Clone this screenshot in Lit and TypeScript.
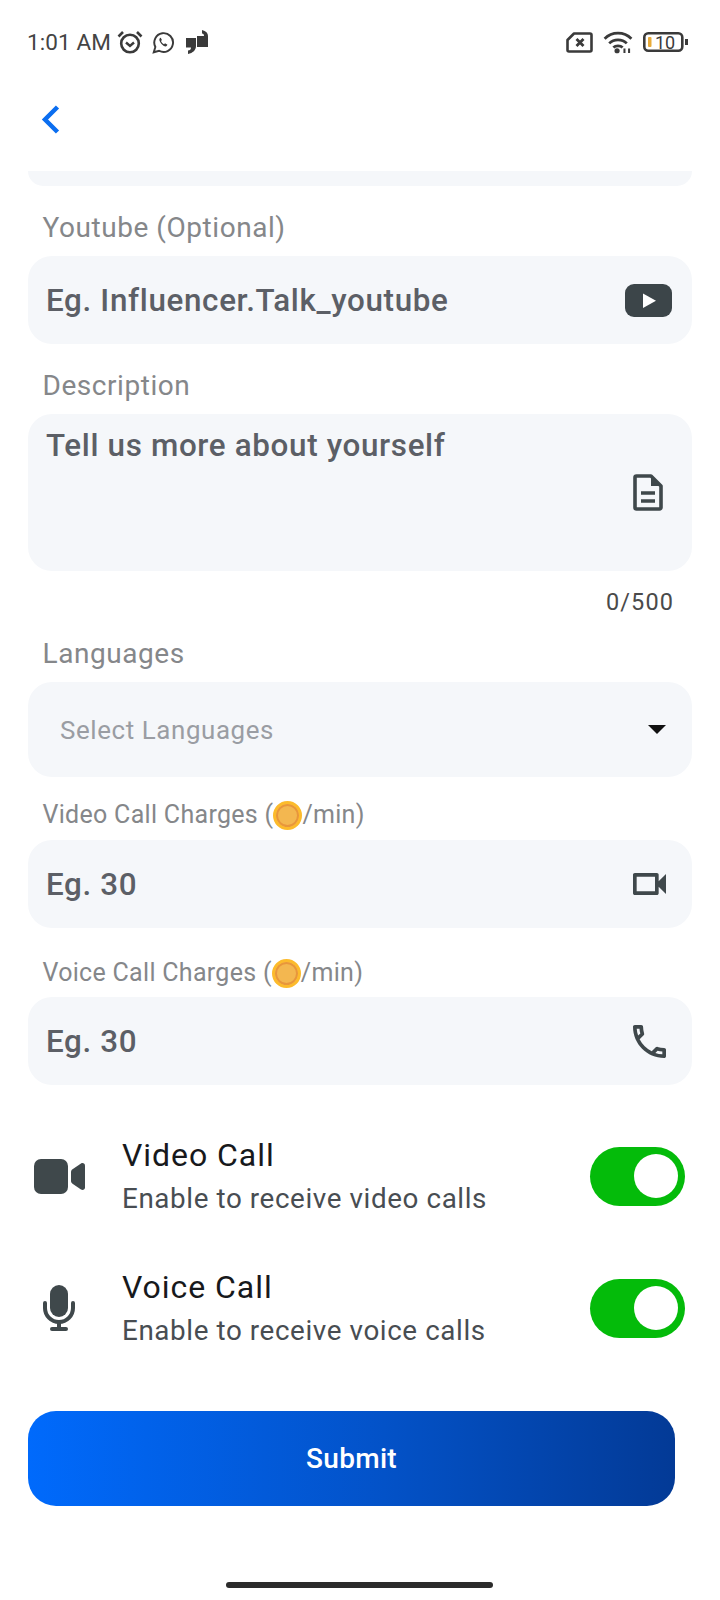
import { LitElement, html, css } from "lit";
import { customElement } from "lit/decorators.js";

const ink = "#3f484b";

@customElement("app-root")
export class AppRoot extends LitElement {
  static styles = css`
    :host { display: block; width: 720px; height: 1600px; background: #fff; font-family: Roboto, "Liberation Sans", sans-serif; overflow: hidden; position: relative; }
    .status { height: 88px; box-sizing: border-box; padding: 27px 32px 0 27px; display: flex; align-items: flex-start; color: #3a3a3a; }
    .time { font-size: 22.5px; line-height: 30px; color: #444; letter-spacing: .1px; }
    .sicons { display: flex; align-items: center; margin-left: 6px; height: 30px; }
    .whats { margin-left: 9px; }
    .quote { margin-left: 11px; }
    .right { margin-left: auto; display: flex; align-items: center; gap: 10px; height: 30px; }
    .nav { height: 83px; padding-left: 40px; box-sizing: border-box; padding-top: 17px; }
    .nav svg { display: block; }
    .form { padding: 0 28px; }
    .stub { height: 15px; background: #f5f7fa; border-radius: 0 0 20px 20px; }
    .label { color: #85878a; font-size: 28px; line-height: 32px; padding-left: 14.5px; letter-spacing: .55px; }
    .l1 { margin-top: 26px; margin-bottom: 12px; }
    .l2 { margin-top: 26px; margin-bottom: 12px; }
    .l3 { margin-top: 21px; margin-bottom: 12px; }
    .lsm { font-size: 25px; letter-spacing: .3px; display: flex; align-items: center; line-height: 30px; height: 30px; }
    .lsm.v { margin-top: 23px; margin-bottom: 10px; }
    .lsm.a { margin-top: 30px; margin-bottom: 9px; }
    .coin { width: 29px; height: 29px; border-radius: 50%; background: #f3b750; border: 3.5px solid #fcbb2c; box-sizing: border-box; box-shadow: inset 0 0 0 2px #e8963c; flex: none; }
    .field { height: 88px; background: #f5f7fa; border-radius: 24px; display: flex; align-items: center; padding: 0 20px 0 18px; box-sizing: border-box; justify-content: space-between; }
    .ph { color: #5c5f66; font-size: 31.4px; font-weight: 500; letter-spacing: .65px; }
    .area { height: 157px; align-items: flex-start; padding-top: 13px; position: relative; }
    .area svg { position: absolute; right: 29px; top: 60px; }
    .count { text-align: right; color: #4a4a4a; font-size: 23.5px; line-height: 30px; padding-right: 18px; margin-top: 16px; letter-spacing: 1.1px; }
    .select { height: 95px; padding-left: 32px; padding-right: 26px; }
    .sel { color: #9a9da3; font-size: 25.9px; letter-spacing: .6px; }
    .caret { width: 0; height: 0; border-left: 9px solid transparent; border-right: 9px solid transparent; border-top: 9px solid #111; }
    .inset { margin-right: 6px; }
    .rows { padding: 0 35px 0 34px; margin-top: 61px; display: flex; flex-direction: column; gap: 72px; }
    .row { display: flex; align-items: center; height: 60px; }
    .ricon { width: 88px; flex: none; display: flex; }
    .text { flex: 1; padding-bottom: 1px; }
    .title { font-size: 32px; line-height: 40px; color: #17191c; letter-spacing: .95px; }
    .sub { font-size: 27.8px; line-height: 36px; color: #484d52; letter-spacing: .6px; margin-top: 6px; }
    .toggle { width: 95px; height: 59px; border-radius: 30px; background: #04bb0a; display: flex; align-items: center; justify-content: flex-end; padding-right: 7px; box-sizing: border-box; }
    .knob { width: 44px; height: 44px; background: #fff; border-radius: 50%; }
    .submit { margin: 73px 45px 0 28px; height: 95px; border-radius: 28px; background: linear-gradient(90deg, #006afc 0%, #0352c8 55%, #033a96 100%); color: #fff; font-size: 28px; font-weight: 500; display: flex; align-items: center; justify-content: center; letter-spacing: .3px; }
    .home { position: absolute; left: 226px; top: 1582px; width: 267px; height: 6px; border-radius: 3px; background: #2b2b2b; }
  `;

  private statusLeft() {
    return html`<div class="sicons">
      <svg width="26" height="24" viewBox="0 0 26 24" fill="none" stroke="#3a3a3a">
        <circle cx="13" cy="13.500" r="8.800" stroke-width="2.600"/>
        <path d="M9 12.500l4 3.500 4-3.500" stroke-width="2.400"/>
        <path d="M1.500 6.500L6 2M24.500 6.500L20 2" stroke-width="2.600"/>
      </svg>
      <svg class="whats" width="23" height="23" viewBox="0 0 26 26" fill="none" stroke="#3a3a3a">
        <path d="M2 24l1.800-6A10.600 10.600 0 1 1 8 22.300z" stroke-width="2.200"/>
        <path d="M9 8c-1.500 1.500-.5 4 1.500 6.500s5 3.500 6 2.500l1-1.500-2.800-1.600-1 1c-1.500-.5-3-2.200-3.500-3.700l1-1-1.300-2.700z" fill="#3a3a3a" stroke="none"/>
      </svg>
      <svg class="quote" width="22" height="25" viewBox="0 0 22 25" fill="#3a3a3a">
        <path d="M0 8h10v8c0 4-3 7-8 8v-3.500c2 0 3-1 3-3H0z"/>
        <path d="M11 17h11V6c0-3-2-5-6-6v3.500c1.500 0 2 1 2 2.500h-7z"/>
      </svg>
    </div>`;
  }

  private statusRight() {
    return html`<div class="right">
      <svg width="27" height="21" viewBox="0 0 27 21" fill="none" stroke="#3a3a3a" stroke-width="2.600">
        <path d="M8 1.500h16a1.500 1.500 0 0 1 1.500 1.500v15a1.500 1.500 0 0 1-1.500 1.500H3a1.500 1.500 0 0 1-1.500-1.500V8z" stroke-linejoin="round"/>
        <path d="M10.500 7l7 7M17.500 7l-7 7" stroke-width="2.800"/>
      </svg>
      <svg width="30" height="24" viewBox="0 0 32 26" fill="none" stroke="#3a3a3a" stroke-width="3">
        <path d="M1.500 9.500C9.500 1.500 22.500 1.500 30.500 9.500"/>
        <path d="M6.500 14.500c5-5 14-5 19 0"/>
        <path d="M11 19c2.500-2.500 7.500-2.500 10 0"/>
        <circle cx="15" cy="22.500" r="2.800" fill="#3a3a3a" stroke="none"/>
        <path d="M23 25v-5M28 25v-5" stroke-width="2.200"/>
      </svg>
      <svg width="45" height="20" viewBox="0 0 45 20" fill="none">
        <rect x="1.300" y="1.300" width="38" height="17.400" rx="4" stroke="#3a3a3a" stroke-width="2.600"/>
        <rect x="5" y="5" width="3.500" height="10" rx="1" fill="#e8ab3a"/>
        <rect x="42" y="7" width="3" height="6" fill="#3a3a3a"/>
        <text x="12" y="16.500" font-size="18" fill="#3a3a3a" font-family="Roboto">10</text>
      </svg>
    </div>`;
  }

  private yt() {
    return html`<svg width="47" height="33" viewBox="0 0 47 33"><rect width="47" height="33" rx="9" fill="#3c4549"/><path d="M18 9.500v14.500l13-7.300z" fill="#fff"/></svg>`;
  }
  private doc() {
    return html`<svg width="30" height="37" viewBox="0 0 30 37" fill="none"><path d="M2 3.500a1.500 1.500 0 0 1 1.500-1.500H18l10 10v21.500a1.500 1.500 0 0 1-1.500 1.500H3.500a1.500 1.500 0 0 1-1.500-1.500z" stroke="${ink}" stroke-width="3.600" stroke-linejoin="round"/><path d="M18 2l10 10H18z" fill="${ink}"/><path d="M8 19h14M8 27h14" stroke="${ink}" stroke-width="3.600"/></svg>`;
  }
  private cam() {
    return html`<svg class="inset" width="33" height="22" viewBox="3 6 18 12" fill="${ink}" preserveAspectRatio="none"><path d="M15 8v8H5V8h10m1-2H4c-.55 0-1 .45-1 1v10c0 .55.45 1 1 1h12c.55 0 1-.45 1-1v-3.500l4 4v-11l-4 4V7c0-.55-.45-1-1-1z"/></svg>`;
  }
  private phone() {
    return html`<svg class="inset" width="33" height="33" viewBox="3 3 18 18" fill="${ink}"><path d="M6.540 5c.06.89.21 1.760.45 2.590l-1.200 1.200c-.41-1.200-.67-2.470-.76-3.790h1.510m9.860 12.020c.85.24 1.720.39 2.600.45v1.490c-1.320-.09-2.590-.35-3.800-.75l1.200-1.190M7.500 3H4c-.55 0-1 .45-1 1 0 9.390 7.610 17 17 17 .55 0 1-.45 1-1v-3.490c0-.55-.45-1-1-1-1.240 0-2.450-.2-3.570-.57-.1-.04-.21-.05-.31-.05-.26 0-.51.1-.71.29l-2.200 2.200c-2.830-1.450-5.150-3.760-6.590-6.590l2.200-2.200c.28-.28.36-.67.25-1.020C8.700 6.450 8.500 5.250 8.500 4c0-.55-.45-1-1-1z"/></svg>`;
  }

  private toggleRow(icon: unknown, title: string, sub: string) {
    return html`<div class="row">
      <div class="ricon">${icon}</div>
      <div class="text"><div class="title">${title}</div><div class="sub">${sub}</div></div>
      <div class="toggle"><div class="knob"></div></div>
    </div>`;
  }

  render() {
    const bigCam = html`<svg width="51" height="35" viewBox="0 0 51 35" fill="${ink}"><rect width="34" height="35" rx="7"/><path d="M37 13c0-1 .5-2 1.500-2.700L47 4.500c1.800-1 4 0 4 2v22c0 2-2.200 3-4 2l-8.500-5.800C37.500 24 37 23 37 22z"/></svg>`;
    const mic = html`<svg width="32" height="46" viewBox="0 0 32 46" style="margin-left:9px" fill="none"><rect x="7" y="0" width="18" height="32" rx="9" fill="${ink}"/><path d="M2 18v5a14 14 0 0 0 28 0v-5" stroke="${ink}" stroke-width="4" stroke-linecap="round"/><path d="M16 37v7M9 44h14" stroke="${ink}" stroke-width="4" stroke-linecap="round"/></svg>`;
    return html`
      <div class="status">
        <div class="time">1:01 AM</div>
        ${this.statusLeft()}
        ${this.statusRight()}
      </div>
      <div class="nav">
        <svg width="20" height="29" viewBox="0 0 20 29" fill="none"><path d="M17.500 2L5 14.500 17.500 27" stroke="#0b6ef0" stroke-width="4.500"/></svg>
      </div>
      <div class="form">
        <div class="stub"></div>
        <div class="label l1">Youtube (Optional)</div>
        <div class="field"><span class="ph">Eg. Influencer.Talk_youtube</span>${this.yt()}</div>
        <div class="label l2">Description</div>
        <div class="field area"><span class="ph">Tell us more about yourself</span>${this.doc()}</div>
        <div class="count">0/500</div>
        <div class="label l3">Languages</div>
        <div class="field select"><span class="sel">Select Languages</span><span class="caret"></span></div>
        <div class="label lsm v">Video Call Charges (<span class="coin"></span>/min)</div>
        <div class="field"><span class="ph">Eg. 30</span>${this.cam()}</div>
        <div class="label lsm a">Voice Call Charges (<span class="coin"></span>/min)</div>
        <div class="field"><span class="ph">Eg. 30</span>${this.phone()}</div>
      </div>
      <div class="rows">
        ${this.toggleRow(bigCam, "Video Call", "Enable to receive video calls")}
        ${this.toggleRow(mic, "Voice Call", "Enable to receive voice calls")}
      </div>
      <div class="submit">Submit</div>
      <div class="home"></div>
    `;
  }
}
